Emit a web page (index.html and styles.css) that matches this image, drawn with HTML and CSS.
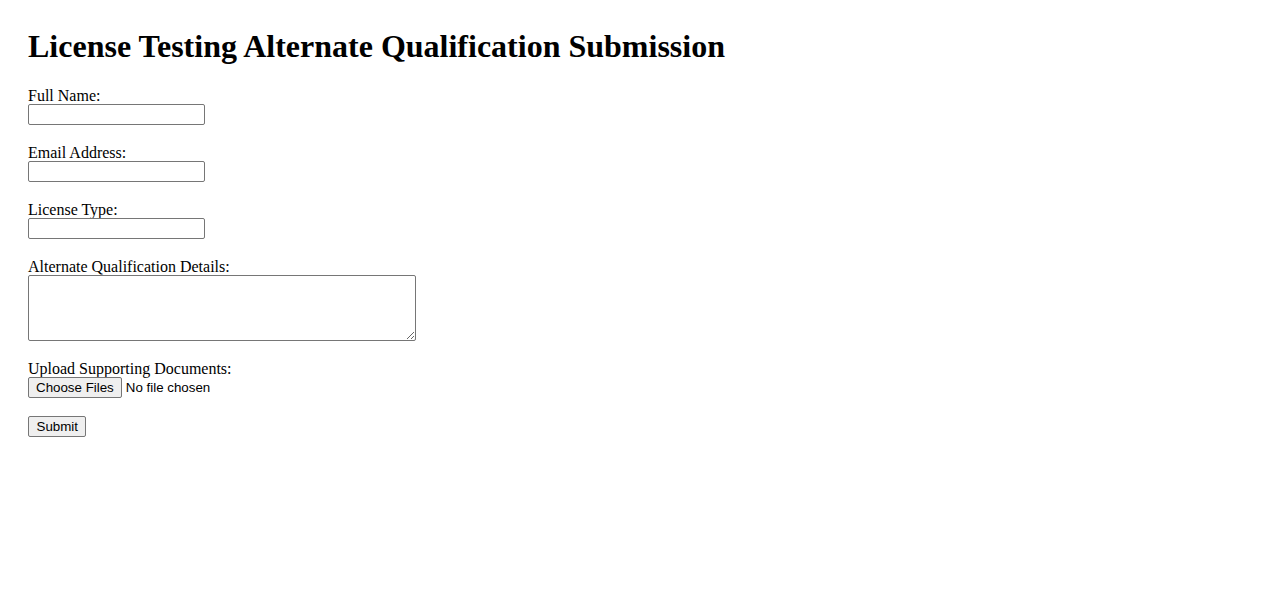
FILE: index.html
```html
<!DOCTYPE html>
<html lang="en">
<head>
<meta charset="utf-8">
<title>License Testing Alternate Qualification Submission</title>
<link rel="stylesheet" href="styles.css">
</head>
<body>
<h1 class="title">License Testing Alternate Qualification Submission</h1>
<form class="form">
  <div class="field">
    <label class="label" for="name">Full Name:</label>
    <input class="text" type="text" id="name" name="name">
  </div>
  <div class="field">
    <label class="label" for="email">Email Address:</label>
    <input class="text" type="email" id="email" name="email">
  </div>
  <div class="field">
    <label class="label" for="license">License Type:</label>
    <input class="text" type="text" id="license" name="license">
  </div>
  <div class="field">
    <label class="label" for="details">Alternate Qualification Details:</label>
    <textarea class="area" id="details" name="details" rows="4"></textarea>
  </div>
  <div class="field">
    <label class="label" for="docs">Upload Supporting Documents:</label>
    <input class="file" type="file" id="docs" name="docs" multiple>
  </div>
  <div class="field">
    <button class="submit" type="submit">Submit</button>
  </div>
</form>
</body>
</html>
```
FILE: styles.css
```css
html, body {
  background: #ffffff;
}
body {
  margin: 8px;
  padding: 20px;
  font-family: "Liberation Serif", "Times New Roman", serif;
  font-size: 16px;
  color: #000000;
}
.title {
  font-size: 32px;
  font-weight: bold;
  margin: 0 0 22px 0;
  line-height: 36px;
}
.form {
  display: flex;
  flex-direction: column;
  align-items: flex-start;
  gap: 18px;
}
.field {
  display: flex;
  flex-direction: column;
  align-items: flex-start;
}
.label {
  display: block;
  line-height: 18px;
  padding-top: 1px;
  margin-bottom: -1px;
}
.text {
  box-sizing: border-box;
  width: 177px;
  height: 21px;
  margin: 0;
  padding: 1px 2px;
  border: 1px solid #767676;
  border-radius: 2px;
  font-family: "Liberation Sans", Arial, sans-serif;
  font-size: 13.33px;
}
.area {
  box-sizing: border-box;
  width: 388px;
  height: 66px;
  margin: 0;
  padding: 2px;
  border: 1px solid #767676;
  border-radius: 2px;
  font-family: "Liberation Mono", monospace;
  font-size: 13.33px;
}
.file {
  margin: 0;
  height: 21px;
  font-family: "Liberation Sans", Arial, sans-serif;
  font-size: 13.33px;
}
.file::file-selector-button {
  font-family: "Liberation Sans", Arial, sans-serif;
  font-size: 13.33px;
  height: 21px;
  padding: 1px 7px;
  margin: 0 4px 0 0;
  border: 1px solid #767676;
  border-radius: 2px;
  background: #efefef;
  color: #000;
}
.submit {
  box-sizing: border-box;
  height: 21px;
  margin: 0;
  padding: 1px 7.5px;
  border: 1px solid #767676;
  border-radius: 2px;
  background: #efefef;
  color: #000;
  font-family: "Liberation Sans", Arial, sans-serif;
  font-size: 13.33px;
}
```
